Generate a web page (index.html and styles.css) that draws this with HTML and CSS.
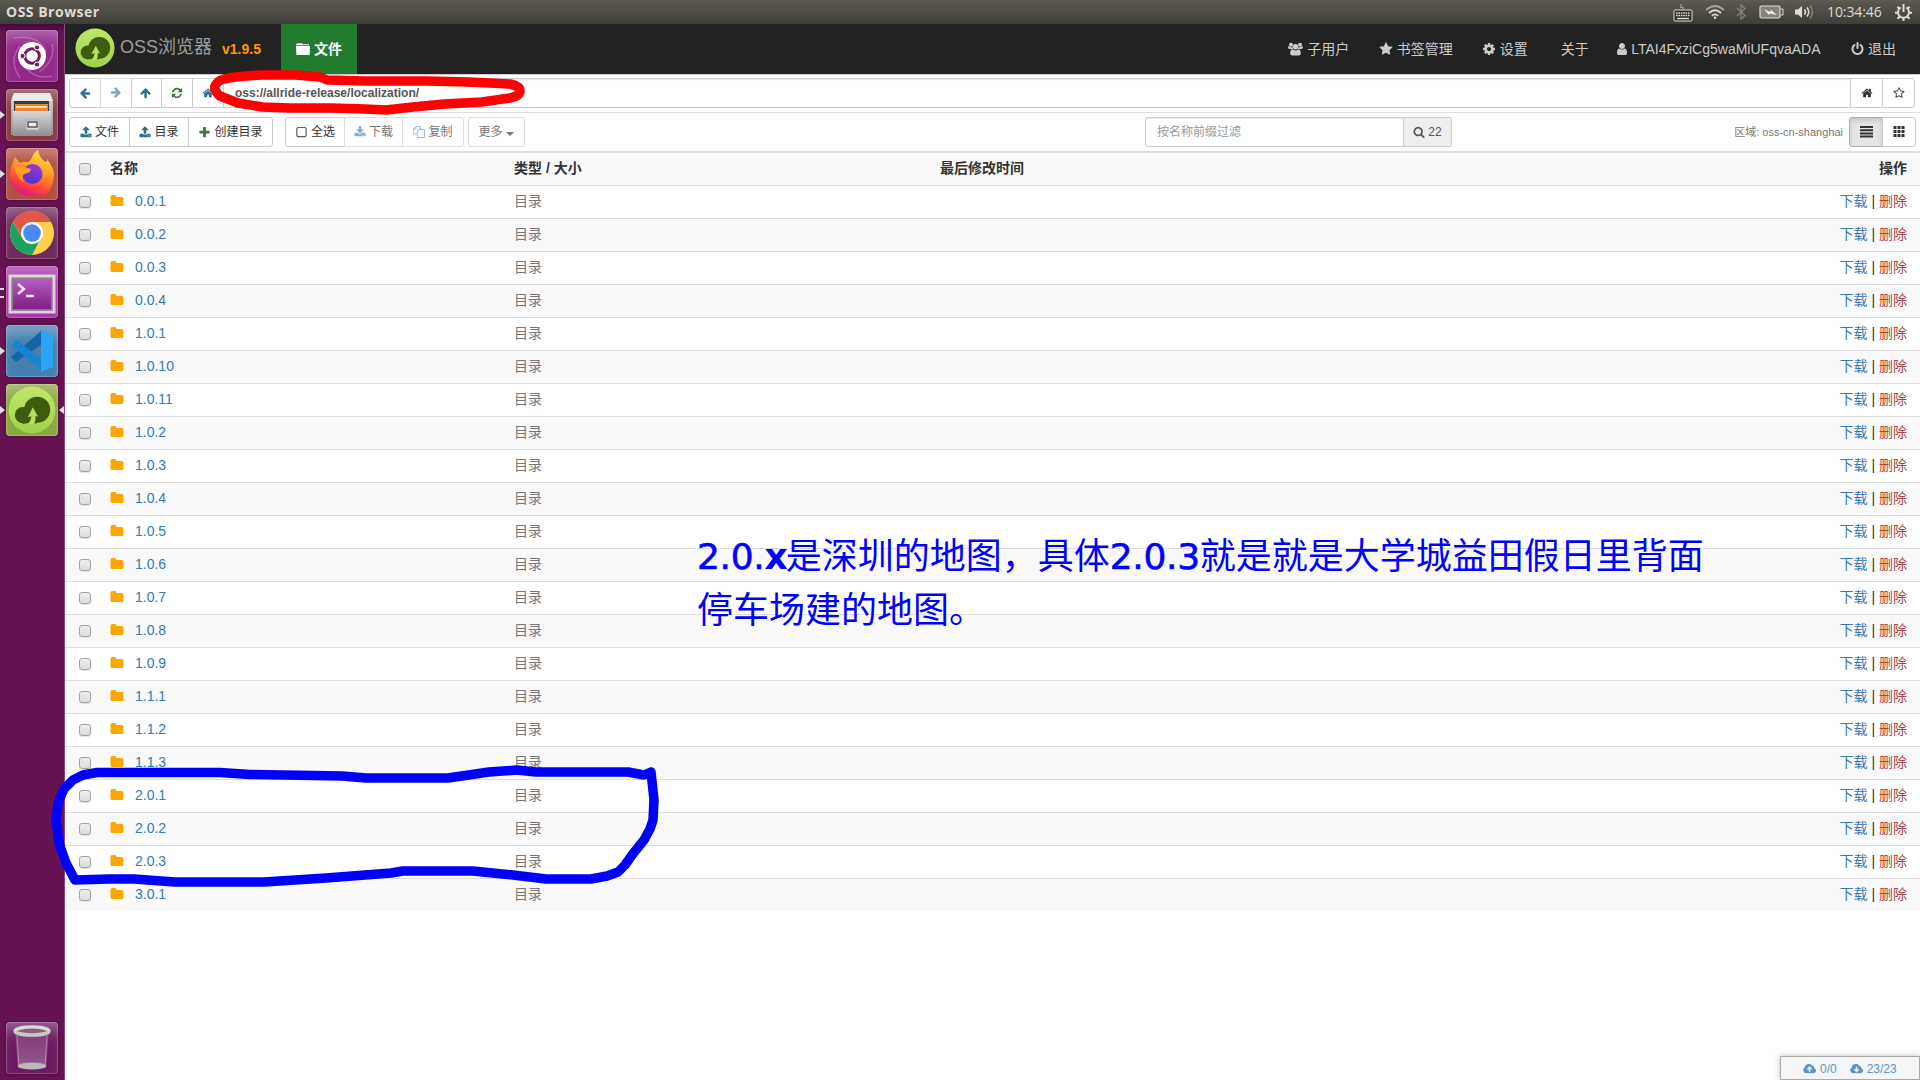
FILE: index.html
```html
<!DOCTYPE html>
<html lang="zh-CN">
<head>
<meta charset="utf-8">
<title>OSS Browser</title>
<link rel="stylesheet" href="styles.css">
</head>
<body>
<svg class="defs" width="0" height="0" aria-hidden="true">
  <defs>
    <symbol id="left" viewBox="0 0 1792 1792"><path d="M1664 896v128q0 53-32.5 90.5t-84.5 37.5h-704l293 294q38 36 38 90t-38 90l-75 76q-37 37-90 37-52 0-91-37l-651-652q-37-37-37-90 0-52 37-91l651-650q38-38 91-38 52 0 90 38l75 74q38 38 38 91t-38 91l-293 293h704q52 0 84.5 37.5t32.5 90.5z"/></symbol>
    <symbol id="home" viewBox="0 0 1792 1792"><path d="M1472 992v480q0 26-19 45t-45 19h-384v-384h-256v384h-384q-26 0-45-19t-19-45v-480q0-1 .5-3t.5-3l575-474 575 474q1 2 1 6zm223-69l-62 74q-8 9-21 11h-3q-13 0-21-7l-692-577-692 577q-12 8-24 7-13-2-21-11l-62-74q-8-10-7-23.5t11-21.5l719-599q32-26 76-26t76 26l244 204v-195q0-14 9-23t23-9h192q14 0 23 9t9 23v408l219 182q10 8 11 21.5t-7 23.5z"/></symbol>
    <symbol id="refresh" viewBox="0 0 1792 1792"><path d="M1639 1056q0 5-1 7-64 268-268 434.5t-478 166.5q-146 0-282.5-55t-243.5-157l-129 129q-19 19-45 19t-45-19-19-45v-448q0-26 19-45t45-19h448q26 0 45 19t19 45-19 45l-137 137q71 66 161 102t187 36q134 0 250-65t186-179q11-17 53-117 8-23 30-23h192q13 0 22.5 9.5t9.5 22.5zm25-800v448q0 26-19 45t-45 19h-448q-26 0-45-19t-19-45 19-45l138-138q-148-137-349-137-134 0-250 65t-186 179q-11 17-53 117-8 23-30 23h-199q-13 0-22.5-9.5t-9.5-22.5v-7q65-268 270-434.5t480-166.5q146 0 284 55.5t245 156.5l130-129q19-19 45-19t45 19 19 45z"/></symbol>
    <symbol id="star" viewBox="0 0 1792 1792"><path d="M1728 647q0 22-26 48l-363 354 86 500q1 7 1 20 0 21-10.5 35.5t-30.5 14.5q-19 0-40-12l-449-236-449 236q-22 12-40 12-21 0-31.5-14.5t-10.5-35.5q0-6 2-20l86-500-364-354q-25-27-25-48 0-37 56-46l502-73 225-455q19-41 49-41t49 41l225 455 502 73q56 9 56 46z"/></symbol>
    <symbol id="star-o" viewBox="0 0 1792 1792"><path d="M1201 1004l306-297-422-62-189-382-189 382-422 62 306 297-73 421 378-199 377 199zm527-357q0 22-26 48l-363 354 86 500q1 7 1 20 0 50-41 50-19 0-40-12l-449-236-449 236q-22 12-40 12-21 0-31.5-14.5t-10.5-35.5q0-6 2-20l86-500-364-354q-25-27-25-48 0-37 56-46l502-73 225-455q19-41 49-41t49 41l225 455 502 73q56 9 56 46z"/></symbol>
    <symbol id="folder" viewBox="0 0 1792 1792"><path d="M1728 608v704q0 92-66 158t-158 66h-1216q-92 0-158-66t-66-158v-960q0-92 66-158t158-66h320q92 0 158 66t66 158v32h672q92 0 158 66t66 158z"/></symbol>
    <symbol id="folder-tab" viewBox="0 0 14 14"><path d="M1 2.200V1.200H6L6.800 2.200H13V3.200H0V2.200zM0 4H14L13.600 13H.4z"/></symbol>
    <symbol id="upload" viewBox="0 0 1792 1792"><path d="M1344 1472q0-26-19-45t-45-19-45 19-19 45 19 45 45 19 45-19 19-45zm256 0q0-26-19-45t-45-19-45 19-19 45 19 45 45 19 45-19 19-45zm128-224v320q0 40-28 68t-68 28h-1472q-40 0-68-28t-28-68v-320q0-40 28-68t68-28h427q21 56 70.5 92t110.5 36h256q61 0 110.5-36t70.5-92h427q40 0 68 28t28 68zm-325-648q-17 40-59 40h-256v448q0 26-19 45t-45 19h-256q-26 0-45-19t-19-45v-448h-256q-42 0-59-40-17-39 14-69l448-448q18-19 45-19t45 19l448 448q31 30 14 69z"/></symbol>
    <symbol id="download" viewBox="0 0 1792 1792"><path d="M1344 1344q0-26-19-45t-45-19-45 19-19 45 19 45 45 19 45-19 19-45zm256 0q0-26-19-45t-45-19-45 19-19 45 19 45 45 19 45-19 19-45zm128-224v320q0 40-28 68t-68 28h-1472q-40 0-68-28t-28-68v-320q0-40 28-68t68-28h465l135 136q58 56 136 56t136-56l136-136h464q40 0 68 28t28 68zm-325-569q17 41-14 70l-448 448q-18 19-45 19t-45-19l-448-448q-31-29-14-70 17-39 59-39h256v-448q0-26 19-45t45-19h256q26 0 45 19t19 45v448h256q42 0 59 39z"/></symbol>
    <symbol id="plus" viewBox="0 0 1792 1792"><path d="M1600 736v192q0 40-28 68t-68 28h-416v416q0 40-28 68t-68 28h-192q-40 0-68-28t-28-68v-416h-416q-40 0-68-28t-28-68v-192q0-40 28-68t68-28h416v-416q0-40 28-68t68-28h192q40 0 68 28t28 68v416h416q40 0 68 28t28 68z"/></symbol>
    <symbol id="square-o" viewBox="0 0 1792 1792"><path d="M1312 256h-832q-66 0-113 47t-47 113v832q0 66 47 113t113 47h832q66 0 113-47t47-113v-832q0-66-47-113t-113-47zm288 160v832q0 119-84.5 203.5t-203.5 84.5h-832q-119 0-203.5-84.5t-84.5-203.5v-832q0-119 84.5-203.5t203.5-84.5h832q119 0 203.5 84.5t84.5 203.5z"/></symbol>
    <symbol id="copy" viewBox="0 0 14 14"><path d="M4.500 9.500H1Q.5 9.500.5 9V3.500L3.500.5H8Q8.500.5 8.500 1V3.500M3.500.8V3.500H.8M5 6.500Q5 4 7 4H13Q13.500 4 13.500 4.500V13Q13.500 13.500 13 13.500H5.500Q5 13.500 5 13z" fill="none" stroke="currentColor"/></symbol>
    <symbol id="search" viewBox="0 0 1792 1792"><path d="M1216 832q0-185-131.500-316.500t-316.500-131.500-316.500 131.500-131.500 316.500 131.500 316.500 316.500 131.500 316.500-131.500 131.500-316.500zm512 832q0 52-38 90t-90 38q-54 0-90-38l-343-342q-179 124-399 124-143 0-273.500-55.500t-225-150-150-225-55.500-273.500 55.500-273.500 150-225 225-150 273.500-55.500 273.500 55.500 225 150 150 225 55.500 273.500q0 220-124 399l343 343q37 37 37 90z"/></symbol>
    <symbol id="cog" viewBox="0 0 1792 1792"><path d="M1152 896q0-106-75-181t-181-75-181 75-75 181 75 181 181 75 181-75 75-181zm512-109v222q0 12-8 23t-20 13l-185 28q-19 54-39 91 35 50 107 138 10 12 10 25t-9 23q-27 37-99 108t-94 71q-12 0-26-9l-138-108q-44 23-91 38-16 136-29 186-7 28-36 28h-222q-14 0-24.5-8.5t-11.5-21.5l-28-184q-49-16-90-37l-141 107q-10 9-25 9-14 0-25-11-126-114-165-168-7-10-7-23 0-12 8-23 15-21 51-66.5t54-70.5q-27-50-41-99l-183-27q-13-2-21-12.5t-8-23.5v-222q0-12 8-23t19-13l186-28q14-46 39-92-40-57-107-138-10-12-10-24 0-10 9-23 26-36 98.5-107.5t94.5-71.5q13 0 26 10l138 107q44-23 91-38 16-136 29-186 7-28 36-28h222q14 0 24.5 8.5t11.5 21.5l28 184q49 16 90 37l142-107q9-9 24-9 13 0 25 10 129 119 165 170 7 8 7 22 0 12-8 23-15 21-51 66.5t-54 70.5q26 50 41 98l183 28q13 2 21 12.5t8 23.5z"/></symbol>
    <symbol id="user" viewBox="256 0 1280 1792"><path d="M1536 1399q0 109-62.500 187t-150.500 78h-854q-88 0-150.500-78t-62.500-187q0-85 8.500-160.500t31.500-152 58.500-131 94-89 134.500-34.500q131 128 313 128t313-128q76 0 134.500 34.500t94 89 58.500 131 31.500 152 8.500 160.500zm-256-887q0 159-112.500 271.500t-271.500 112.500-271.500-112.500-112.500-271.500 112.500-271.500 271.500-112.500 271.500 112.500 112.500 271.500z"/></symbol>
    <symbol id="users" viewBox="0 0 15 14"><circle cx="3" cy="2.800" r="2"/><circle cx="12" cy="2.800" r="2"/><path d="M4.300 7H2Q0 7 0 5.800 0 4 .9 4 3 6 4.500 4.700 4.500 6 5.300 6.900zM10.700 7H13Q15 7 15 5.800 15 4 14.100 4 12 6 10.500 4.700 10.500 6 9.700 6.900z"/><circle cx="7.500" cy="4.700" r="2.700"/><path d="M4.500 7.300Q7.500 9.500 10.500 7.300 12.800 7.500 12.800 11.500 12.800 13.500 10.800 13.500H4.200Q2.200 13.500 2.200 11.500 2.200 7.500 4.500 7.300z"/></symbol>
    <symbol id="power" viewBox="128 0 1536 1792"><path d="M1664 896q0 156-61 298t-164 245-245 164-298 61-298-61-245-164-164-245-61-298q0-182 80.500-343t226.500-270q43-32 95.500-25t83.500 50q32 42 24.500 94.500t-49.500 84.500q-98 74-151.500 181t-53.500 228q0 104 40.500 198.500t109.500 163.500 163.500 109.500 198.500 40.500 198.500-40.500 163.500-109.500 109.500-163.500 40.500-198.500q0-121-53.500-228t-151.500-181q-42-32-49.500-84.500t24.500-94.500q31-43 84-50t95 25q146 109 226.500 270t80.500 343zm-640-768v640q0 52-38 90t-90 38-90-38-38-90v-640q0-52 38-90t90-38 90 38 38 90z"/></symbol>
    <symbol id="cloud" viewBox="0 0 15 11"><path d="M3.300 10.500A3.200 3.200 0 0 1 2 4.400 4.200 4.200 0 0 1 9.800 2.500 2.200 2.200 0 0 1 12 5 2.900 2.900 0 0 1 12 10.500z"/></symbol>
    <symbol id="oss" viewBox="0 0 40 40"><circle cx="20" cy="20" r="19.500" fill="url(#lime)"/><g fill="#3f5b0c"><circle cx="24.300" cy="19.800" r="10.900"/><circle cx="12.600" cy="24.300" r="6.900"/><path d="M12 31.200H24V18H14z"/></g><path d="M20.700 17.800L25 25.500 22.800 25Q23.300 29.500 21.500 32H15.500Q19.500 29.500 19.400 25.200L16.500 26z" fill="#b4df60"/></symbol>
    <linearGradient id="lime" x2="0" y2="1"><stop stop-color="#c0e86a"/><stop offset="1" stop-color="#9fd14b"/></linearGradient>
    <linearGradient id="steel" x2="0" y2="1"><stop stop-color="#d8d8d8"/><stop offset="1" stop-color="#8f8f8f"/></linearGradient>
    <linearGradient id="fire" x1=".8" y1="0" x2=".4" y2="1"><stop stop-color="#fff04a"/><stop offset=".45" stop-color="#ff9a22"/><stop offset=".75" stop-color="#ff4a3a"/><stop offset="1" stop-color="#e3157a"/></linearGradient>
    <linearGradient id="globe" x1=".7" y1="0" x2=".3" y2="1"><stop stop-color="#a135e0"/><stop offset="1" stop-color="#4a35c8"/></linearGradient>
    <linearGradient id="term" x2="0" y2="1"><stop stop-color="#c263c4"/><stop offset="1" stop-color="#75177d"/></linearGradient>
    <linearGradient id="glass" x2="0" y2="1"><stop stop-color="#fff" stop-opacity=".12"/><stop offset="1" stop-color="#fff" stop-opacity=".28"/></linearGradient>
  </defs>
</svg>

<header class="panel">
  <span class="panel-title">OSS Browser</span>
  <div class="tray">
    <svg class="t-keyboard" width="20" height="20" viewBox="0 0 20 20"><path d="M10 8V5.500H8V2" fill="none" stroke="#a9a69d" stroke-width="1.200"/><rect x="1" y="8" width="18" height="11" rx="1" fill="#2f2e2a" stroke="#dfdbd2"/><path d="M3 11H17M3 13.500H17" stroke="#dfdbd2" stroke-width="1.600" stroke-dasharray="1.600 .8"/><path d="M4 16.500H16" stroke="#dfdbd2" stroke-width="1.400"/></svg>
    <svg class="t-wifi" width="20" height="14" viewBox="0 0 20 14"><g fill="none" stroke-width="1.800"><path d="M1 5Q10-3 19 5" stroke="#a5a29a"/><path d="M4 8Q10 2.500 16 8M6.800 10.700Q10 8 13.200 10.700" stroke="#dfdbd2"/></g><circle cx="10" cy="12.700" r="1.300" fill="#dfdbd2"/></svg>
    <svg class="t-bt" width="10" height="16" viewBox="0 0 10 16"><path d="M1 4L9 11.500 5 15V1L9 4.500 1 12" fill="none" stroke="#85827a" stroke-width="1.300"/></svg>
    <svg class="t-battery" width="25" height="14" viewBox="0 0 25 14"><rect x="1" y="1" width="20" height="12" rx="1.500" fill="#85827a" stroke="#dfdbd2" stroke-width="1.200"/><path d="M22 4H24V10H22" fill="none" stroke="#dfdbd2"/><path d="M5 4L11 7 12 5 18 10 11 8.500 10 10z" fill="#f2efe8"/></svg>
    <svg class="t-volume" width="20" height="16" viewBox="0 0 20 16"><path d="M0 5.500H3L7 2V14L3 10.500H0z" fill="#dfdbd2"/><g fill="none" stroke="#dfdbd2" stroke-width="1.500"><path d="M9.500 5.500Q11.500 8 9.500 10.500M12 3.500Q15.500 8 12 12.500"/><path d="M15 1.500Q20 8 15 14.500" stroke="#85827a"/></g></svg>
    <span class="clock">10:34:46</span>
    <svg class="t-gear" width="17" height="17" viewBox="0 0 17 17"><g fill="none" stroke="#dfdbd2" stroke-width="2"><path d="M5.700 3.500A5.500 5.500 0 1 0 11.300 3.500M8.500 0V8"/><path d="M0 8.700H3M14 8.700H17M2.500 14.700L4.500 12.700M14.500 14.700L12.500 12.700M8.500 14V17M2.500 2.700L4.500 4.700M14.500 2.700L12.500 4.700"/></g></svg>
  </div>
</header>

<div class="desktop">
  <aside class="launcher">
    <div class="tile ubuntu"><svg viewBox="0 0 52 52"><g fill="none" stroke="#dba5cf" stroke-width="1.500" opacity=".4"><path d="M8 8Q33 4 40 22M46 14Q50 30 33 42M14 48Q2 30 14 16M46 46Q30 50 20 38"/></g><circle cx="26" cy="26" r="14" fill="#fff"/><circle cx="26" cy="26" r="7.300" fill="none" stroke="#771b60" stroke-width="3"/><g fill="#771b60" stroke="#fff" stroke-width="1"><circle cx="16.500" cy="26" r="2.600"/><circle cx="31" cy="17.500" r="2.600"/><circle cx="31" cy="34.500" r="2.600"/></g></svg></div>
    <div class="tile files running"><svg viewBox="0 0 52 52"><path d="M8 4H44L47 13V46H5V13z" fill="url(#steel)"/><path d="M8 4H44L47 12H5z" fill="#e9e9e9"/><path d="M8 12H43V24H8z" fill="#3c3a36"/><path d="M9 15H42V24H9z" fill="#e98436"/><path d="M10 18H41" stroke="#fbd9a2" stroke-width="2"/><path d="M7 22H45V47H7z" fill="url(#steel)"/><rect x="20" y="31" width="13" height="10" rx="1" fill="#ddd" stroke="#aaa"/><rect x="22" y="33" width="9" height="5" fill="#eee" stroke="#444" stroke-width="1.300"/></svg></div>
    <div class="tile firefox running"><svg viewBox="0 0 52 52"><path d="M26 48C11 48 3 37 4 25 5 18 7 14 9 9L14 15Q17 13 22 14 25 12 26 10 27 5 32 2 33 9 38 13 42 15 41 11 48 20 48 27 47 42 38 48 26 48z" fill="url(#fire)"/><circle cx="26.500" cy="26" r="10" fill="url(#globe)"/><path d="M8 17Q12 20 16 18L25 21Q25 25 18 26 15 30 18 34 10 31 8 17z" fill="#ff9d24"/></svg></div>
    <div class="tile chrome"><svg viewBox="0 0 52 52"><circle cx="26" cy="26" r="22" fill="#ffd04b"/><path d="M7 15A22 22 0 0 1 45 15H26L17 31z" fill="#e25648"/><path d="M7 15L17 32 26 36 35 31 26 48A22 22 0 0 1 7 15z" fill="#1da160"/><circle cx="26" cy="26" r="11" fill="#fff"/><circle cx="26" cy="26" r="8.800" fill="#4a8af4"/></svg></div>
    <div class="tile terminal running double"><svg viewBox="0 0 52 52"><rect x="4" y="10" width="44" height="36" fill="url(#term)" stroke="#d8d5d7" stroke-width="3"/><rect x="6.500" y="12.500" width="39" height="31" fill="none" stroke="#8a7c8a"/><path d="M12 18L18 23 12 28M20 30H28" fill="none" stroke="#f3e6f3" stroke-width="2.500"/></svg></div>
    <div class="tile vscode running"><svg viewBox="0 0 52 52"><path d="M5 32L35 6V20L10 37z" fill="#1565a6"/><path d="M5 20L10 15 36 34V46z" fill="#1583cf"/><path d="M35 5L47 10V42L35 47z" fill="#2aa5f2"/></svg></div>
    <div class="tile ossapp running active"><svg viewBox="0 0 52 52"><use href="#oss" x="2" y="2" width="48" height="48"/></svg></div>
    <div class="tile trash"><svg viewBox="0 0 52 52"><path d="M9 9L12 46H40L43 9z" fill="url(#glass)"/><path d="M11 13L13 44M41 13L39 44" stroke="#c9a6c6" opacity=".6"/><ellipse cx="26" cy="44" rx="14" ry="3.500" fill="#b9bab5"/><ellipse cx="26" cy="9" rx="17" ry="4" fill="#866081" stroke="#c9cbc5" stroke-width="3.500"/><path d="M9 8Q26 1 43 8" fill="none" stroke="#eee"/></svg></div>
  </aside>

  <main class="app">
    <nav class="navbar">
      <svg class="logo"><use href="#oss"/></svg>
      <span class="brand">OSS浏览器</span>
      <span class="version">v1.9.5</span>
      <a class="tab"><svg class="i14"><use href="#folder-tab"/></svg>文件</a>
      <div class="menu">
        <a><svg class="i15"><use href="#users"/></svg>子用户</a>
        <a class="m-marks"><svg class="i14"><use href="#star"/></svg>书签管理</a>
        <a class="m-set"><svg class="i14"><use href="#cog"/></svg>设置</a>
        <a class="m-about">关于</a>
        <a class="m-user"><svg class="i10"><use href="#user"/></svg>LTAI4FxziCg5waMiUFqvaADA</a>
        <a class="m-exit"><svg class="i12"><use href="#power"/></svg>退出</a>
      </div>
    </nav>

    <section class="address">
      <div class="group">
        <span class="btn nav-btn blue"><svg><use href="#left"/></svg></span>
        <span class="btn nav-btn blue off"><svg class="r180"><use href="#left"/></svg></span>
        <span class="btn nav-btn blue"><svg class="r90"><use href="#left"/></svg></span>
        <span class="btn nav-btn green"><svg><use href="#refresh"/></svg></span>
        <span class="btn nav-btn blue"><svg><use href="#home"/></svg></span>
        <span class="btn path">oss://allride-release/localization/</span>
        <span class="btn side"><svg><use href="#home"/></svg></span>
        <span class="btn side"><svg><use href="#star-o"/></svg></span>
      </div>
    </section>

    <section class="tools">
      <div class="group">
        <span class="btn w61"><svg class="c-blue"><use href="#upload"/></svg>文件</span>
        <span class="btn w60"><svg class="c-blue"><use href="#upload"/></svg>目录</span>
        <span class="btn w85"><svg class="c-green big"><use href="#plus"/></svg>创建目录</span>
      </div>
      <div class="group second">
        <span class="btn w60"><svg class="big"><use href="#square-o"/></svg>全选</span>
        <span class="btn w59 off"><svg class="c-link"><use href="#download"/></svg>下载</span>
        <span class="btn w62 off"><svg class="c-link"><use href="#copy"/></svg>复制</span>
      </div>
      <span class="btn more off">更多<i class="caret"></i></span>
      <div class="group filter">
        <span class="btn field">按名称前缀过滤</span>
        <span class="btn count"><svg><use href="#search"/></svg>22</span>
      </div>
      <span class="region">区域: oss-cn-shanghai</span>
      <div class="group">
        <span class="btn view on"><svg viewBox="0 0 13 12"><path d="M0 0H13V2H0zM0 3.200H13V5.200H0zM0 6.400H13V8.400H0zM0 9.600H13V11.600H0z"/></svg></span>
        <span class="btn view"><svg viewBox="0 0 12 12"><path d="M0 0H3V3H0zM4 0H7V3H4zM8 0H11V3H8zM0 4H3V7H0zM4 4H7V7H4zM8 4H11V7H8zM0 8H3V11H0zM4 8H7V11H4zM8 8H11V11H8z"/></svg></span>
      </div>
    </section>

    <section class="list">
      <div class="row head"><i class="check"></i><b>名称</b><b>类型 / 大小</b><b>最后修改时间</b><b class="ops">操作</b></div>
      <div class="row"><i class="check"></i><a class="name"><svg><use href="#folder"/></svg>0.0.1</a><span class="kind">目录</span><span></span><span class="ops"><a>下载</a> | <a class="del">删除</a></span></div>
      <div class="row"><i class="check"></i><a class="name"><svg><use href="#folder"/></svg>0.0.2</a><span class="kind">目录</span><span></span><span class="ops"><a>下载</a> | <a class="del">删除</a></span></div>
      <div class="row"><i class="check"></i><a class="name"><svg><use href="#folder"/></svg>0.0.3</a><span class="kind">目录</span><span></span><span class="ops"><a>下载</a> | <a class="del">删除</a></span></div>
      <div class="row"><i class="check"></i><a class="name"><svg><use href="#folder"/></svg>0.0.4</a><span class="kind">目录</span><span></span><span class="ops"><a>下载</a> | <a class="del">删除</a></span></div>
      <div class="row"><i class="check"></i><a class="name"><svg><use href="#folder"/></svg>1.0.1</a><span class="kind">目录</span><span></span><span class="ops"><a>下载</a> | <a class="del">删除</a></span></div>
      <div class="row"><i class="check"></i><a class="name"><svg><use href="#folder"/></svg>1.0.10</a><span class="kind">目录</span><span></span><span class="ops"><a>下载</a> | <a class="del">删除</a></span></div>
      <div class="row"><i class="check"></i><a class="name"><svg><use href="#folder"/></svg>1.0.11</a><span class="kind">目录</span><span></span><span class="ops"><a>下载</a> | <a class="del">删除</a></span></div>
      <div class="row"><i class="check"></i><a class="name"><svg><use href="#folder"/></svg>1.0.2</a><span class="kind">目录</span><span></span><span class="ops"><a>下载</a> | <a class="del">删除</a></span></div>
      <div class="row"><i class="check"></i><a class="name"><svg><use href="#folder"/></svg>1.0.3</a><span class="kind">目录</span><span></span><span class="ops"><a>下载</a> | <a class="del">删除</a></span></div>
      <div class="row"><i class="check"></i><a class="name"><svg><use href="#folder"/></svg>1.0.4</a><span class="kind">目录</span><span></span><span class="ops"><a>下载</a> | <a class="del">删除</a></span></div>
      <div class="row"><i class="check"></i><a class="name"><svg><use href="#folder"/></svg>1.0.5</a><span class="kind">目录</span><span></span><span class="ops"><a>下载</a> | <a class="del">删除</a></span></div>
      <div class="row"><i class="check"></i><a class="name"><svg><use href="#folder"/></svg>1.0.6</a><span class="kind">目录</span><span></span><span class="ops"><a>下载</a> | <a class="del">删除</a></span></div>
      <div class="row"><i class="check"></i><a class="name"><svg><use href="#folder"/></svg>1.0.7</a><span class="kind">目录</span><span></span><span class="ops"><a>下载</a> | <a class="del">删除</a></span></div>
      <div class="row"><i class="check"></i><a class="name"><svg><use href="#folder"/></svg>1.0.8</a><span class="kind">目录</span><span></span><span class="ops"><a>下载</a> | <a class="del">删除</a></span></div>
      <div class="row"><i class="check"></i><a class="name"><svg><use href="#folder"/></svg>1.0.9</a><span class="kind">目录</span><span></span><span class="ops"><a>下载</a> | <a class="del">删除</a></span></div>
      <div class="row"><i class="check"></i><a class="name"><svg><use href="#folder"/></svg>1.1.1</a><span class="kind">目录</span><span></span><span class="ops"><a>下载</a> | <a class="del">删除</a></span></div>
      <div class="row"><i class="check"></i><a class="name"><svg><use href="#folder"/></svg>1.1.2</a><span class="kind">目录</span><span></span><span class="ops"><a>下载</a> | <a class="del">删除</a></span></div>
      <div class="row"><i class="check"></i><a class="name"><svg><use href="#folder"/></svg>1.1.3</a><span class="kind">目录</span><span></span><span class="ops"><a>下载</a> | <a class="del">删除</a></span></div>
      <div class="row"><i class="check"></i><a class="name"><svg><use href="#folder"/></svg>2.0.1</a><span class="kind">目录</span><span></span><span class="ops"><a>下载</a> | <a class="del">删除</a></span></div>
      <div class="row"><i class="check"></i><a class="name"><svg><use href="#folder"/></svg>2.0.2</a><span class="kind">目录</span><span></span><span class="ops"><a>下载</a> | <a class="del">删除</a></span></div>
      <div class="row"><i class="check"></i><a class="name"><svg><use href="#folder"/></svg>2.0.3</a><span class="kind">目录</span><span></span><span class="ops"><a>下载</a> | <a class="del">删除</a></span></div>
      <div class="row"><i class="check"></i><a class="name"><svg><use href="#folder"/></svg>3.0.1</a><span class="kind">目录</span><span></span><span class="ops"><a>下载</a> | <a class="del">删除</a></span></div>
    </section>

    <footer class="transfers">
      <span><svg viewBox="0 0 15 11"><use href="#cloud"/><path d="M7 9V6M4.800 6.500L7 4 9.200 6.500" class="arrow"/></svg>0/0</span>
      <span><svg viewBox="0 0 15 11"><use href="#cloud"/><path d="M7 3.500V7M4.800 6.200L7 8.700 9.200 6.200" class="arrow"/></svg>23/23</span>
    </footer>
  </main>
</div>

<svg class="marks" width="1920" height="1080" viewBox="0 0 1920 1080">
  <path class="red" d="M224 79Q238 76 262 75L296 75 320 77 327 80 365 81 427 81 468 82 510 84Q520 86 520 91 520 96 510 98L482 102 444 104 413 107 386 110 365 109 331 108 289 108 262 107 238 103 220 96Q214 91 215 86 217 81 224 79z"/>
  <path class="blue" d="M651 772L644 775 628 772 536 772 517 770 489 772 448 778 366 778 342 776 250 774.500 220 772.500 97 772.500 83 775 73 780 64 789 58 803 56 820 59 843 66 863 75 880 109 879 134 879 175 882 264 882 326 878 391 873 403 871 473 871 513 875 546 879 591 879 607 876 618 872 625 865 632 855 644 840 650 829 653 820 654 800z"/>
</svg>
<p class="note"><span class="latin">2.0.<b>x</b></span>是深圳的地图，具体<span class="latin">2.0.3</span>就是就是大学城益田假日里背面<br>停车场建的地图。</p>
</body>
</html>
```
FILE: styles.css
```css
* { box-sizing: border-box; }
body {
  margin: 0; width: 1920px; height: 1080px; overflow: hidden;
  display: flex; flex-direction: column; background: #fff;
  font: 14px/20px "Liberation Sans", "Noto Sans CJK SC", sans-serif; color: #333;
}
svg { fill: currentColor; flex: none; }
.defs { position: absolute; }

.panel {
  height: 24px; flex: none; display: flex; align-items: center; justify-content: space-between;
  padding: 0 8px 0 6px; color: #dfdbd2;
  background: linear-gradient(#5f5d4f 0, #595750 2px, #3e3d38 100%);
}
.panel-title { font: bold 14px/24px "Open Sans", "DejaVu Sans", sans-serif; letter-spacing: .5px; }
.tray { display: flex; align-items: center; }
.t-wifi { margin-left: 12px; }
.t-bt { margin-left: 11px; }
.t-battery { margin-left: 13px; }
.t-volume { margin-left: 11px; }
.clock { margin: 0 12px; width: 56px; font: 14px/24px "Open Sans", sans-serif; letter-spacing: -.1px; white-space: nowrap; }

.desktop { flex: 1; display: flex; min-height: 0; }
.launcher {
  width: 65px; flex: none; display: flex; flex-direction: column; gap: 7px; padding: 6px 0 6px 6px;
  background: linear-gradient(#3f0a36 0, #661253 8px); border-right: 1px solid #8a4a7b;
}
.tile {
  width: 52px; height: 52px; flex: none; position: relative; border-radius: 4px;
  box-shadow: 0 0 3px rgba(0,0,0,.4), inset 0 0 0 1px rgba(255,255,255,.2), inset 0 14px 14px -6px rgba(255,255,255,.3);
}
.tile svg { width: 52px; height: 52px; display: block; }
.ubuntu { background: #93298a; }
.files { background: #8b3a44; }
.firefox { background: #b35042; }
.chrome { background: #702a5d; }
.terminal { background: #ab37ad; }
.vscode { background: #4780b0; }
.ossapp { background: #8aa83c; }
.trash { background: #6c1b62; margin-top: auto; }
.running::before, .active::after {
  content: ""; position: absolute; top: 22px; left: -6px;
  border: 4px solid transparent; border-left: 5px solid #ddd; border-right: 0;
}
.double::before { border: 0; width: 4px; height: 6px; border-top: 2px solid #ddd; border-bottom: 2px solid #ddd; }
.active::after { left: 53px; border-left: 0; border-right: 5px solid #ddd; }

.app { flex: 1; min-width: 0; position: relative; }
.navbar { height: 50px; background: #222; display: flex; align-items: center; padding-left: 10px; color: #ccc; }
.logo { width: 40px; height: 40px; margin-top: -2px; }
.brand { width: 92px; margin: -5px 10px 0 5px; font-size: 18px; color: #9d9d9d; white-space: nowrap; }
.version { width: 59px; color: #ff9800; font-weight: bold; font-size: 14px; }
.tab { width: 76px; height: 50px; display: flex; align-items: center; justify-content: center; gap: 4px; background: #237b2d; color: #fff; font-weight: bold; font-size: 14px; }
.menu { margin-left: auto; padding-right: 9px; display: flex; }
.menu a { display: flex; align-items: center; gap: 4px; padding: 0 15px; white-space: nowrap; }
.menu .m-marks { margin-left: -.5px; }
.menu .m-set { margin-left: -1px; }
.menu .m-about { margin-left: 3px; }
.menu .m-user { margin-left: -1.500px; }
.menu .m-exit { margin-left: .5px; }
.i15 { width: 15px; height: 14px; } .i14 { width: 14px; height: 14px; } .i12 { width: 13px; height: 14px; } .i10 { width: 10px; height: 14px; }

.group { display: flex; }
.btn {
  height: 30px; border: 1px solid #ccc; border-radius: 3px; background: #fff; flex: none;
  display: flex; align-items: center; justify-content: center; gap: 3px; font-size: 12px; white-space: nowrap;
}
.btn svg { width: 12px; height: 12px; }
.btn .big { width: 13px; height: 13px; }
.group .btn + .btn { margin-left: -1px; border-top-left-radius: 0; border-bottom-left-radius: 0; }
.group .btn:not(:last-child) { border-top-right-radius: 0; border-bottom-right-radius: 0; }
.address { height: 39px; border-top: 1px solid #ccc; border-bottom: 1px solid #ddd; padding: 3px 5px 0 4px; }
.nav-btn { width: 31.800px; }
.blue, .c-blue { color: #31708f; } .green, .c-green { color: #3c763d; } .c-link { color: #337ab7; }
.off { color: #777; border-color: #ddd; }
.blue.off { color: #84a9bd; }
.off .c-link { color: #85afd4; }
.r180 { transform: rotate(180deg); } .r90 { transform: rotate(90deg); }
.group .path { flex: 1; justify-content: flex-start; padding-left: 11px; font-weight: bold; color: #555; box-shadow: inset 0 1px 1px rgba(0,0,0,.08); }
.side { width: 33px; }

.tools { height: 38px; padding: 4px 4px 0; display: flex; }
.w59 { width: 59px; } .w60 { width: 60px; } .w61 { width: 61px; } .w62 { width: 62px; } .w85 { width: 85px; }
.second { margin-left: 12px; }
.more { width: 57px; margin-left: 3.500px; }
.caret { border: 4px solid transparent; border-top-color: #777; border-bottom: 0; margin-top: 3px; }
.filter { margin-left: 620.500px; }
.field { width: 259px; color: #999; box-shadow: inset 0 1px 1px rgba(0,0,0,.08); }
.group .field { justify-content: flex-start; padding-left: 11px; }
.count { width: 49px; background: #eee; color: #555; }
.region { margin-left: auto; margin-right: 6px; font-size: 11px; line-height: 30px; color: #777; }
.view { width: 34px; }
.view.on { background: #e6e6e6; border-color: #adadad; box-shadow: inset 0 3px 5px rgba(0,0,0,.125); }
.view svg { width: 13px; }

.list { border-top: 2px solid #ddd; }
.row {
  display: grid; grid-template-columns: 31px 404px 426px 1fr 200px; align-items: center;
  height: 33px; padding: 0 13px 2px 14px; border-top: 1px solid #ddd;
}
.row:nth-child(odd) { background: #f9f9f9; }
.row.head { height: 32px; border-top: 0; }
.row:nth-child(2n) { background: #fff; }
.check { width: 12px; height: 12px; margin-top: 1px; border: 1px solid #a3a3a3; border-radius: 3px; background: linear-gradient(#eee, #ddd); box-shadow: 0 1px 0 #e4e4e4; }
.name { display: flex; align-items: center; color: #337ab7; }
.name svg { width: 14px; height: 14px; margin: 0 11.500px 0 -.5px; color: orange; }
.kind { color: #777; }
.ops { text-align: right; }
.ops a { color: #337ab7; }
.ops .del { color: #a94442; }

.transfers {
  position: absolute; right: 0; bottom: 0; width: 140px; height: 24px; border: 1px solid #aaa; background: #f5f5f5;
  box-shadow: 0 0 6px rgba(0,0,0,.25); color: #5b95c9; font-size: 12px; display: flex; align-items: center; gap: 13px; padding: 1px 0 0 22px;
}
.transfers span { display: flex; align-items: center; gap: 3px; }
.transfers svg { width: 14px; height: 11px; }
.arrow { fill: none; stroke: #f5f5f5; stroke-width: 1.600; }

.marks { position: absolute; left: 0; top: 0; }
.marks path { fill: none; stroke-width: 9.500; stroke-linejoin: round; }
.marks .red { stroke: #f00; }
.marks .blue { stroke: #00f; }
.note {
  position: absolute; left: 697px; top: 530px; margin: 0; color: #00f; white-space: nowrap;
  font: 36px/54px "DejaVu Sans", "Noto Sans CJK SC", sans-serif;
}
.latin { letter-spacing: -.3px; -webkit-text-stroke: .6px #00f; }
.latin b { -webkit-text-stroke: 0; letter-spacing: -2px; }
```
